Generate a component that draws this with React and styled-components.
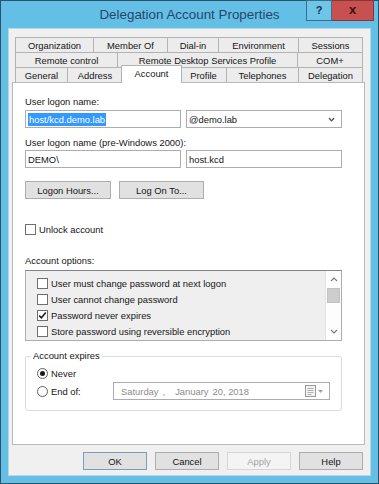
import React from "react";
import styled, { createGlobalStyle } from "styled-components";

const Global = createGlobalStyle`
  html, body { margin: 0; padding: 0; background: #fff; }
  body {
    font-family: "Liberation Sans", Arial, sans-serif;
    font-size: 9.4px;
    color: #151515;
  }
  * { box-sizing: border-box; }
`;

const Window = styled.div`
  width: 379px;
  height: 484px;
  background: #63bfe5;
  border: 1px solid #2e5268;
  display: flex;
  flex-direction: column;
`;

const TitleBar = styled.div`
  height: 27px;
  flex: none;
  display: grid;
  grid-template-columns: 1fr auto 1fr;
  align-items: center;
`;

const Title = styled.div`
  grid-column: 2;
  font-size: 13.4px;
  color: #26466a;
  white-space: nowrap;
`;

const CaptionButtons = styled.div`
  grid-column: 3;
  justify-self: end;
  align-self: start;
  display: flex;
  margin-right: 4px;
  margin-top: -1px;
`;

const CaptionButton = styled.div`
  width: ${(p) => p.$w}px;
  height: 21px;
  background: ${(p) => (p.$close ? "#c75050" : "#6ec5e8")};
  border: 1px solid ${(p) => (p.$close ? "#8c3535" : "#3b6f8d")};
  border-left-width: ${(p) => (p.$close ? 0 : 1)}px;
  display: flex;
  align-items: center;
  justify-content: center;
  font-weight: bold;
  font-size: ${(p) => (p.$close ? 13 : 11)}px;
  color: ${(p) => (p.$close ? "#3a1414" : "#1c2f4b")};
  padding-bottom: 2px;
`;

const Client = styled.div`
  flex: 1;
  margin: 0 7px 7px;
  background: #f0f0f0;
  border: 1px solid #b7d6e6;
  padding: 8px 5px 5px 3px;
  display: flex;
  flex-direction: column;
`;

const TabStrip = styled.div`
  padding: 0 3px;
  flex: none;
`;

const TabRow = styled.div`
  display: flex;
  align-items: flex-start;
  height: 15px;
`;

const Tab = styled.div`
  flex: none;
  width: ${(p) => p.$w + (p.$last ? 1 : 0)}px;
  height: 15px;
  border-top: 1px solid #b3b3b3;
  border-left: 1px solid #b3b3b3;
  border-right: ${(p) => (p.$last ? "1px solid #b3b3b3" : "none")};
  background: #ececec;
  display: flex;
  align-items: center;
  justify-content: center;
  white-space: nowrap;
`;

const ActiveTab = styled.div`
  flex: none;
  position: relative;
  z-index: 1;
  width: ${(p) => p.$w + 3}px;
  height: 18px;
  margin: -2px -2px 0 -1px;
  background: #fff;
  border: 1px solid #b3b3b3;
  border-bottom: none;
  display: flex;
  align-items: flex-start;
  justify-content: center;
  padding-top: 2px;
  white-space: nowrap;
`;

const Panel = styled.div`
  flex: 1;
  background: #fff;
  border: 1px solid #b9b9b9;
  padding: 13px 22px 0 12px;
  display: flex;
  flex-direction: column;
`;

const Label = styled.div`
  height: 12px;
  line-height: 12px;
  margin-top: ${(p) => p.$mt || 0}px;
  white-space: nowrap;
`;

const FieldRow = styled.div`
  display: flex;
  gap: 5px;
  margin-top: ${(p) => p.$mt || 0}px;
`;

const TextBox = styled.div`
  width: 156px;
  height: 18px;
  border: 1px solid #abadb3;
  background: #fff;
  padding: 0 2px;
  display: flex;
  align-items: center;
  white-space: nowrap;
`;

const Selected = styled.span`
  background: #3399ff;
  color: #fff;
  line-height: 13px;
  padding: 0 1px;
`;

const Chevron = styled.svg`
  margin-left: auto;
  margin-right: 4px;
`;

const ButtonRow = styled.div`
  display: flex;
  gap: 8px;
  margin-top: ${(p) => p.$mt || 0}px;
  justify-content: ${(p) => (p.$end ? "flex-end" : "flex-start")};
  padding-right: ${(p) => (p.$end ? 2 : 0)}px;
`;

const Button = styled.button`
  width: ${(p) => p.$w}px;
  height: 18px;
  padding: 0;
  margin: 0;
  font: inherit;
  color: ${(p) => (p.disabled ? "#a3a3a3" : "#151515")};
  background: ${(p) => (p.disabled ? "#f4f4f4" : "#e1e1e1")};
  border: 1px solid
    ${(p) => (p.disabled ? "#d6d6d6" : p.$default ? "#7b9dba" : "#adadad")};
  display: flex;
  align-items: center;
  justify-content: center;
`;

const CheckRow = styled.div`
  display: flex;
  align-items: center;
  gap: 3px;
  height: ${(p) => p.$h || 13}px;
  margin-top: ${(p) => p.$mt || 0}px;
  white-space: nowrap;
`;

const Box = styled.div`
  width: 11px;
  height: 11px;
  flex: none;
  border: 1px solid #6f6f6f;
  background: #fff;
  display: flex;
  align-items: center;
  justify-content: center;
`;

const ListBox = styled.div`
  margin-top: 3px;
  height: 71px;
  border: 1px solid #abadb3;
  border-top-color: #7f838a;
  background: #efefef;
  display: flex;
`;

const ListItems = styled.div`
  flex: 1;
  padding: 4px 0 0 11px;
`;

const ScrollBar = styled.div`
  width: 16px;
  background: #fdfdfd;
  border-left: 1px solid #e3e3e3;
  display: flex;
  flex-direction: column;
`;

const ScrollArrow = styled.div`
  height: 17px;
  flex: none;
  display: flex;
  align-items: center;
  justify-content: center;
`;

const Thumb = styled.div`
  height: 15px;
  flex: none;
  margin: 0 1px;
  background: #cdcdcd;
  border: 1px solid #c2c2c2;
`;

const Track = styled.div`
  flex: 1;
`;

const Group = styled.fieldset`
  margin: 9px 0 0;
  border: 1px solid #dcdcdc;
  border-radius: 3px;
  padding: 5px 11px 10px;
  min-width: 0;
`;

const Legend = styled.legend`
  padding: 0 2px;
  margin-left: -6px;
  line-height: 12px;
`;

const RadioRow = styled.div`
  display: flex;
  align-items: center;
  height: ${(p) => p.$h || 13}px;
  margin-top: ${(p) => p.$mt || 0}px;
`;

const RadioLabel = styled.div`
  display: flex;
  align-items: center;
  gap: 3px;
  width: ${(p) => (p.$w ? `${p.$w}px` : "auto")};
  flex: none;
`;

const Radio = styled.div`
  width: 11px;
  height: 11px;
  border-radius: 50%;
  border: 1px solid #5f5f5f;
  background: #fff;
  display: flex;
  align-items: center;
  justify-content: center;
  &::after {
    content: "";
    display: ${(p) => (p.$on ? "block" : "none")};
    width: 5px;
    height: 5px;
    border-radius: 50%;
    background: #1a1a1a;
  }
`;

const DatePicker = styled.div`
  flex: 1;
  height: 18px;
  border: 1px solid #abadb3;
  background: #fff;
  color: #8d8d8d;
  display: flex;
  align-items: center;
  padding-left: 7px;
  white-space: nowrap;
`;

const DatePart = styled.span`
  margin-left: ${(p) => p.$ml || 0}px;
`;

const CalIcon = styled.svg`
  margin-left: auto;
  margin-right: 5px;
`;

function Check({ on }) {
  return (
    <Box>
      {on && (
        <svg width="9" height="9" viewBox="0 0 9 9">
          <path d="M1.2 4.6 L3.4 6.8 L7.8 1.6" fill="none" stroke="#1a1a1a" strokeWidth="1.5" />
        </svg>
      )}
    </Box>
  );
}

const row1 = [
  ["Organization", 78],
  ["Member Of", 74],
  ["Dial-in", 51],
  ["Environment", 80],
  ["Sessions", 64],
];
const row2 = [
  ["Remote control", 102],
  ["Remote Desktop Services Profile", 180],
  ["COM+", 65],
];
const row3 = [
  ["General", 52],
  ["Address", 55],
  ["Account", 58, true],
  ["Profile", 46],
  ["Telephones", 72],
  ["Delegation", 64],
];

const options = [
  ["User must change password at next logon", false],
  ["User cannot change password", false],
  ["Password never expires", true],
  ["Store password using reversible encryption", false],
];

function renderRow(tabs) {
  return tabs.map(([name, w, active], i) =>
    active ? (
      <ActiveTab key={name} $w={w}>
        {name}
      </ActiveTab>
    ) : (
      <Tab key={name} $w={w} $last={i === tabs.length - 1}>
        {name}
      </Tab>
    )
  );
}

export default function App() {
  return (
    <>
      <Global />
      <Window>
        <TitleBar>
          <Title>Delegation Account Properties</Title>
          <CaptionButtons>
            <CaptionButton $w={26}>?</CaptionButton>
            <CaptionButton $w={42} $close>
              x
            </CaptionButton>
          </CaptionButtons>
        </TitleBar>
        <Client>
          <TabStrip>
            <TabRow>{renderRow(row1)}</TabRow>
            <TabRow>{renderRow(row2)}</TabRow>
            <TabRow>{renderRow(row3)}</TabRow>
          </TabStrip>
          <Panel>
            <Label>User logon name:</Label>
            <FieldRow $mt={2}>
              <TextBox>
                <Selected>host/kcd.demo.lab</Selected>
              </TextBox>
              <TextBox>
                @demo.lab
                <Chevron width="7" height="5" viewBox="0 0 7 5">
                  <path d="M1 1 L3.5 3.8 L6 1" fill="none" stroke="#444" strokeWidth="1.2" />
                </Chevron>
              </TextBox>
            </FieldRow>
            <Label $mt={9}>User logon name (pre-Windows 2000):</Label>
            <FieldRow $mt={1}>
              <TextBox>DEMO\</TextBox>
              <TextBox>host.kcd</TextBox>
            </FieldRow>
            <ButtonRow $mt={13}>
              <Button $w={86}>Logon Hours...</Button>
              <Button $w={85}>Log On To...</Button>
            </ButtonRow>
            <CheckRow $mt={24}>
              <Check />
              Unlock account
            </CheckRow>
            <Label $mt={19}>Account options:</Label>
            <ListBox>
              <ListItems>
                {options.map(([text, on]) => (
                  <CheckRow key={text} $h={16}>
                    <Check on={on} />
                    {text}
                  </CheckRow>
                ))}
              </ListItems>
              <ScrollBar>
                <ScrollArrow>
                  <svg width="8" height="5" viewBox="0 0 8 5">
                    <path d="M1 4 L4 1 L7 4" fill="none" stroke="#7a7a7a" strokeWidth="1.1" />
                  </svg>
                </ScrollArrow>
                <Thumb />
                <Track />
                <ScrollArrow>
                  <svg width="8" height="5" viewBox="0 0 8 5">
                    <path d="M1 1 L4 4 L7 1" fill="none" stroke="#7a7a7a" strokeWidth="1.1" />
                  </svg>
                </ScrollArrow>
              </ScrollBar>
            </ListBox>
            <Group>
              <Legend>Account expires</Legend>
              <RadioRow>
                <RadioLabel>
                  <Radio $on />
                  Never
                </RadioLabel>
              </RadioRow>
              <RadioRow $h={18} $mt={2}>
                <RadioLabel $w={76}>
                  <Radio />
                  End of:
                </RadioLabel>
                <DatePicker>
                  <DatePart>Saturday</DatePart>
                  <DatePart $ml={4}>,</DatePart>
                  <DatePart $ml={10}>January</DatePart>
                  <DatePart $ml={4}>20, 2018</DatePart>
                  <CalIcon width="19" height="12" viewBox="0 0 19 12">
                    <rect x="0.5" y="0.5" width="10" height="11" fill="#f4f4f4" stroke="#9a9a9a" />
                    <path d="M2.5 3.5 H8.5 M2.5 5.5 H8.5 M2.5 7.5 H8.5 M2.5 9.5 H6.5" stroke="#b0b0b0" />
                    <path d="M13 5 L18 5 L15.5 8 Z" fill="#a0a0a0" />
                  </CalIcon>
                </DatePicker>
              </RadioRow>
            </Group>
          </Panel>
          <ButtonRow $mt={7} $end>
            <Button $w={64} $default>
              OK
            </Button>
            <Button $w={64}>Cancel</Button>
            <Button $w={64} disabled>
              Apply
            </Button>
            <Button $w={64}>Help</Button>
          </ButtonRow>
        </Client>
      </Window>
    </>
  );
}
